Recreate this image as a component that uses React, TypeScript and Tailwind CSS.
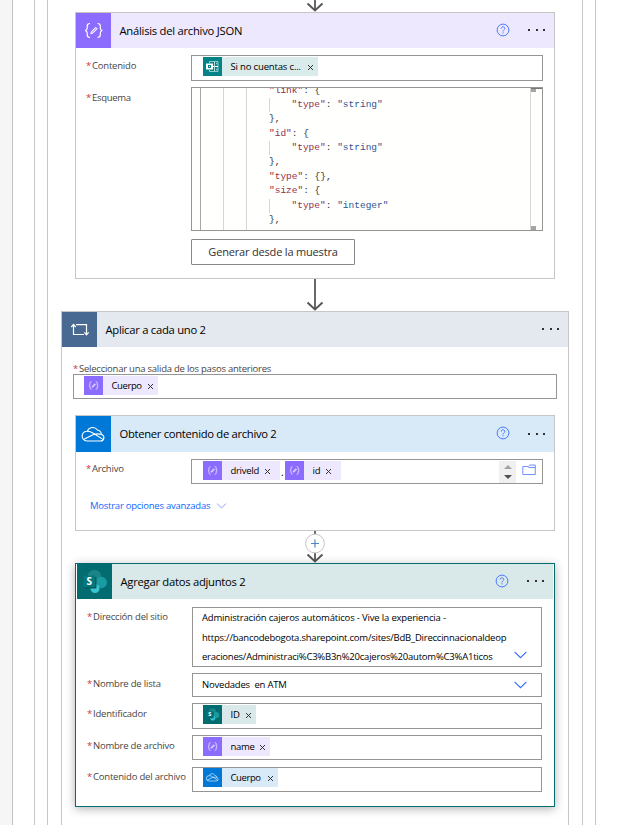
import { ReactNode } from "react";

function BracesIcon({ size }: { size: number }) {
  return (
    <svg width={size} height={size} viewBox="0 0 35 35" fill="none" stroke="#fff" strokeWidth="1.2">
      <path d="M14 10.500c-2.400 0-2.800.8-2.800 2.400v2c0 1.500-.7 2.300-2 2.600 1.300.3 2 1.100 2 2.600v2c0 1.600.4 2.400 2.800 2.400" />
      <path d="M21.500 10.500c2.400 0 2.800.8 2.800 2.400v2c0 1.500.7 2.300 2 2.600-1.300.3-2 1.100-2 2.600v2c0 1.600-.4 2.400-2.800 2.400" />
      <path d="M14.800 20.800l.6-2.300 4.300-4.300 1.600 1.600-4.300 4.300z" fill="#ffffff80" strokeWidth="0.9" />
    </svg>
  );
}

function CloudIcon({ size }: { size: number }) {
  return (
    <svg width={size} height={size} viewBox="0 0 35 35" fill="none" stroke="#fff" strokeWidth="1.1" strokeLinejoin="round">
      <path d="M10.800 24h13.800a3.300 3.300 0 0 0 .8-6.500 5 5 0 0 0-4-4.500 5.700 5.700 0 0 0-10.100 1.200 4.900 4.900 0 0 0-.5 9.800z" />
      <path d="M11.300 14.200c2.500-.2 4 .7 6 2l9.700 6.200M8 22.300l8.500-4.200c2.800-1.400 5.500-1.600 8.900-.6" />
    </svg>
  );
}

function SharePointIcon({ size }: { size: number }) {
  return (
    <svg width={size} height={size} viewBox="0 0 35 35">
      <circle cx="17.500" cy="13" r="7" fill="#1b8488" />
      <circle cx="24.200" cy="18.500" r="5.700" fill="#1a9ba1" />
      <circle cx="18" cy="24.500" r="4.500" fill="#37c6d0" />
      <rect x="8" y="13" width="11.500" height="11.500" rx="1" fill="#035c60" />
      <rect x="6.500" y="11.500" width="11.500" height="11.500" rx="1" fill="#03787c" />
      <text x="12.200" y="20.800" textAnchor="middle" fontSize="10" fontWeight="700" fill="#fff" fontFamily="Open Sans, sans-serif">S</text>
    </svg>
  );
}

function FormsIcon() {
  return (
    <svg width="19" height="19" viewBox="0 0 19 19" fill="none">
      <path d="M6.500 6V4.500h8.500v10H6.500V13" stroke="#8ccccd" />
      <path d="M10 9.500h5" stroke="#fff" />
      <path d="M11.500 5v9" stroke="#b5dede" />
      <path d="M13 6.500h1.500M13 12.500h1.500" stroke="#8ccccd" strokeWidth="1.500" />
      <rect x="3" y="6.500" width="7" height="6" fill="#fff" />
      <rect x="5.500" y="8.500" width="2" height="2" stroke="#038387" />
    </svg>
  );
}

function LoopIcon() {
  return (
    <svg width="35" height="35" viewBox="0 0 35 35" fill="none" stroke="#fff" strokeWidth="1.200">
      <path d="M11.500 13v9.500h10.500M14 12.600h10.500v9.500" />
      <path d="M9.300 15l2.200-2.500 2.200 2.500M22.300 20.300l2.200 2.500 2.200-2.500" />
    </svg>
  );
}

function Help() {
  return (
    <svg className="relative -top-px" width="14" height="14" viewBox="0 0 14 14" fill="none" stroke="#4a7bff" strokeWidth="1">
      <circle cx="7" cy="7" r="5.900" />
      <path d="M5.200 5.600C5.200 4.400 6 3.800 7 3.800s1.800.6 1.800 1.600C8.800 6.800 7 6.800 7 8.400M7 9.300v1.100" />
    </svg>
  );
}

function Dots() {
  return (
    <div className="flex w-[17px] items-center justify-between">
      <i className="size-[2px] bg-[#323130]" />
      <i className="size-[2px] bg-[#323130]" />
      <i className="size-[2px] bg-[#323130]" />
    </div>
  );
}

function Chevron({ small = false }: { small?: boolean }) {
  return (
    <svg width={small ? 11 : 13} height={small ? 6 : 8} viewBox="0 0 13 8" fill="none" stroke={small ? "#6f8cff" : "#2f6bff"} strokeWidth="1.100">
      <path d="M.6.8l5.900 5.900L12.400.8" />
    </svg>
  );
}

function Arrow({ height, plus = false }: { height: number; plus?: boolean }) {
  return (
    <svg className="mx-auto block shrink-0" width="20" height={height} viewBox={`0 0 20 ${height}`} fill="none">
      <path d={`M10 0V${height - 1}`} stroke="#6a6866" strokeWidth="2" />
      <path d={`M2.500 ${height - 8.500}L10 ${height - 1.500}L17.500 ${height - 8.500}`} stroke="#555" strokeWidth="1.900" />
      {plus && (
        <>
          <circle cx="10" cy="12.500" r="9.400" fill="#fff" stroke="#c4c4c4" />
          <path d="M10 8.500v8M6 12.500h8" stroke="#4f86c6" strokeWidth="1.200" />
        </>
      )}
    </svg>
  );
}

function Header({ icon, title, tone, iconTone, track, help = true, height = "h-[35px]" }: {
  icon: ReactNode; title: string; tone: string; iconTone: string; track: string; help?: boolean; height?: string;
}) {
  return (
    <div className={`flex shrink-0 items-center pr-[9px] ${height} ${tone}`}>
      <div className={`flex h-full w-[35px] items-center justify-center ${iconTone}`}>{icon}</div>
      <span className={`ml-[8.5px] flex-1 whitespace-nowrap pt-px text-[11.25px] text-black ${track}`}>{title}</span>
      {help && <Help />}
      <div className="-mt-px ml-[18px]">
        <Dots />
      </div>
    </div>
  );
}

function Label({ children, pad, track }: { children: string; pad: string; track: string }) {
  return (
    <div className={`flex w-[105px] shrink-0 whitespace-nowrap text-[9.5px] leading-[20px] text-[#484644] ${pad}`}>
      <span className="w-[6px] text-[#d13438]">*</span>
      <span className={track}>{children}</span>
    </div>
  );
}

function Token({ icon, iconTone, tone, width, track, end = "mr-[4px]", children }: {
  icon: ReactNode; iconTone: string; tone: string; width: string; track: string; end?: string; children: string;
}) {
  return (
    <span className={`flex h-[19px] items-center text-[9.5px] text-black ${width} ${tone}`}>
      <span className={`flex size-[19px] shrink-0 items-center justify-center ${iconTone}`}>{icon}</span>
      <span className={`ml-[8.5px] flex-1 whitespace-nowrap pt-[1.5px] ${track}`}>{children}</span>
      <svg className={`mt-px shrink-0 ${end}`} width="7" height="7" viewBox="0 0 7 7" stroke="#333" strokeWidth="1">
        <path d="M1 1l5 5M6 1L1 6" />
      </svg>
    </span>
  );
}

const field = "flex border border-[#979593]";
const violet = "bg-[#8c6cff]";
const lilac = "bg-[#eee8fe]";

const code: [number, string, string][] = [
  [0, '"link"', ": {"],
  [1, '"type"', '"string"'],
  [0, "", "},"],
  [0, '"id"', ": {"],
  [1, '"type"', '"string"'],
  [0, "", "},"],
  [0, '"type"', ": {},"],
  [0, '"size"', ": {"],
  [1, '"type"', '"integer"'],
  [0, "", "},"],
];

function Schema() {
  return (
    <div className={`${field} h-[144px] w-[352px] overflow-hidden bg-[#fffffd] pl-[8px]`}>
      <div className="w-[23px] shrink-0 border-l border-[#a8a8a8]" />
      <div className="w-[23px] shrink-0 border-l border-[#d6d6d6]" />
      <div className="w-[23px] shrink-0 border-l border-[#d6d6d6]" />
      <div className="-mt-[4.5px] flex-1 font-['Liberation_Mono',monospace] text-[9.5px] leading-[14.4px] text-[#333]">
        {code.map(([indent, key, rest], i) => (
          <div key={i} className={`h-[14.4px] whitespace-pre ${indent ? "border-l border-[#d6d6d6] pl-[21.5px]" : ""}`}>
            <span className="text-[#94304c]">{key}</span>
            {indent ? <>: <span className="text-[#2c5596]">{rest}</span></> : rest}
          </div>
        ))}
      </div>
      <div className="flex w-[12px] flex-col justify-between border-l border-[#d6d6d6]">
        <div className="border-t border-[#777]">
          <div className="h-[3px] w-[5px] bg-[#a5a5a5]" />
        </div>
        <div className="h-[4px] w-[5px] bg-[#a5a5a5]" />
      </div>
    </div>
  );
}

export default function App() {
  return (
    <div className="flex h-[825px] w-[627px] overflow-hidden bg-white font-['Open_Sans','Noto_Sans',sans-serif]">
      <div className="w-[13px] shrink-0 border-r border-[#c3c3c3] bg-[#f6f6f6]" />
      <div className="ml-[21px] flex w-[562px] shrink-0 border-x border-[#c8c6c4] px-[12px]">
        <div className="flex w-[536px] flex-col border-x border-[#c8c6c4]">
          <Arrow height={12} />
          <section className="mx-auto flex h-[267px] w-[480px] shrink-0 flex-col border border-[#c8c6c4]">
            <Header icon={<BracesIcon size={35} />} title="Análisis del archivo JSON" tone={lilac} iconTone={violet} track="tracking-[-0.26px]" />
            <div className="mt-[7px] flex pl-[10px]">
              <Label pad="pt-px" track="tracking-[-0.2px]">Contenido</Label>
              <div className={`${field} h-[26px] w-[352px] pl-[11px] pt-px`}>
                <Token icon={<FormsIcon />} iconTone="bg-[#038387]" tone="bg-[#d9ebea]" width="w-[115px]" track="tracking-[-0.16px]">Si no cuentas c...</Token>
              </div>
            </div>
            <div className="mt-[6px] flex pl-[10px]">
              <Label pad="pt-px" track="tracking-[-0.3px]">Esquema</Label>
              <Schema />
            </div>
            <button className="ml-[115px] mt-[8px] h-[26px] w-[164px] shrink-0 whitespace-nowrap rounded-[1px] border border-[#8a8886] text-[11px] tracking-[-0.18px] text-[#323130]">
              Generar desde la muestra
            </button>
          </section>
          <Arrow height={32} />
          <section className="mx-auto flex h-[560px] w-[508px] shrink-0 flex-col border border-[#c8c6c4]">
            <Header icon={<LoopIcon />} title="Aplicar a cada uno 2" tone="bg-[#e4e8ef]" iconTone="bg-[#486991]" track="tracking-[-0.27px]" help={false} />
            <div className="ml-[11px] mt-[12px] flex h-[15px] whitespace-nowrap text-[9.5px] leading-[20px] text-[#484644]">
              <span className="w-[6px] text-[#d13438]">*</span>
              <span className="tracking-[-0.24px]">Seleccionar una salida de los pasos anteriores</span>
            </div>
            <div className={`${field} ml-[11px] h-[25px] w-[484px] shrink-0 pl-[10px] pt-px`}>
              <Token icon={<BracesIcon size={19} />} iconTone={violet} tone={lilac} width="w-[74px]" track="tracking-[-0.4px]">Cuerpo</Token>
            </div>
            <section className="mx-auto mt-[16px] flex h-[116px] w-[480px] shrink-0 flex-col border border-[#c8c6c4]">
              <Header icon={<CloudIcon size={35} />} title="Obtener contenido de archivo 2" tone="bg-[#d8e9f8]" iconTone="bg-[#0078d7]" track="tracking-[-0.31px]" height="h-[36px]" />
              <div className="mt-[7px] flex pl-[10px]">
                <Label pad="" track="tracking-[-0.2px]">Archivo</Label>
                <div className={`${field} h-[25px] w-[352px] pl-[11px] pt-px`}>
                  <Token icon={<BracesIcon size={19} />} iconTone={violet} tone={lilac} width="w-[77px]" end="mr-[9px]" track="tracking-[-0.3px]">driveId</Token>
                  <span className="w-[5px] pl-[1px] text-[10px] leading-[23px]">.</span>
                  <Token icon={<BracesIcon size={19} />} iconTone={violet} tone={lilac} width="w-[56px]" end="mr-[9px]" track="tracking-[-0.2px]">id</Token>
                  <div className="ml-auto flex w-[17px] flex-col items-center justify-between bg-[#f0f0f0] py-[4px]">
                    <i className="border-x-4 border-b-4 border-x-transparent border-b-[#a3a3a3]" />
                    <i className="border-x-4 border-t-4 border-x-transparent border-t-[#505050]" />
                  </div>
                  <svg className="ml-[6px] mr-[6px] mt-[3px]" width="14" height="12" viewBox="0 0 14 12" fill="none" stroke="#7191ff">
                    <path d="M.8 2.500h5.500l1.500-1.500h5.500v9.500H.8zM6.300 3.500h7" />
                  </svg>
                </div>
              </div>
              <div className="mt-[14px] flex items-center gap-[6px] whitespace-nowrap pl-[14px] text-[9.5px] leading-[16px] text-[#1267ff]">
                <span className="tracking-[-0.24px]">Mostrar opciones avanzadas</span>
                <Chevron small />
              </div>
            </section>
            <Arrow height={32} plus />
            <section className="mx-auto flex h-[244px] w-[480px] shrink-0 flex-col border border-[#036c70] bg-white px-px shadow-[0_2px_9px_rgba(0,0,0,0.3)]">
              <Header icon={<SharePointIcon size={35} />} title="Agregar datos adjuntos 2" tone="bg-[#d9e8e8]" iconTone="bg-[#036c70]" track="tracking-[-0.27px]" />
              <div className="mt-[8px] flex pl-[10px]">
                <Label pad="" track="tracking-[-0.2px]">Dirección del sitio</Label>
                <div className={`${field} h-[60px] w-[350px] items-end pl-[9px]`}>
                  <div className="flex-1 self-start whitespace-nowrap text-[9.5px] leading-[19.5px] text-black">
                    <div className="tracking-[-0.17px]">Administración cajeros automáticos - Vive la experiencia -</div>
                    <div className="tracking-[-0.22px]">https://bancodebogota.sharepoint.com/sites/BdB_Direccinnacionaldeop</div>
                    <div className="tracking-[-0.22px]">eraciones/Administraci%C3%B3n%20cajeros%20autom%C3%A1ticos</div>
                  </div>
                  <div className="mb-[7px] mr-[14px]"><Chevron /></div>
                </div>
              </div>
              <div className="mt-[6px] flex pl-[10px]">
                <Label pad="pt-px" track="tracking-[-0.2px]">Nombre de lista</Label>
                <div className={`${field} h-[24px] w-[350px] items-center pl-[9px] pr-[14px]`}>
                  <span className="flex-1 whitespace-pre text-[9.5px] tracking-[-0.2px] text-black">{"Novedades  en ATM"}</span>
                  <Chevron />
                </div>
              </div>
              <div className="mt-[6px] flex pl-[10px]">
                <Label pad="pt-px" track="tracking-[-0.2px]">Identificador</Label>
                <div className={`${field} h-[26px] w-[350px] pl-[10px] pt-px`}>
                  <Token icon={<SharePointIcon size={19} />} iconTone="bg-[#036c70]" tone="bg-[#d9e8e8]" width="w-[53px]" track="tracking-[-0.2px]">ID</Token>
                </div>
              </div>
              <div className="mt-[6px] flex pl-[10px]">
                <Label pad="pt-px" track="tracking-[-0.22px]">Nombre de archivo</Label>
                <div className={`${field} h-[25px] w-[350px] pl-[10px] pt-px`}>
                  <Token icon={<BracesIcon size={19} />} iconTone={violet} tone={lilac} width="w-[67px]" track="tracking-[-0.3px]">name</Token>
                </div>
              </div>
              <div className="mt-[7px] flex pl-[10px]">
                <Label pad="" track="tracking-[-0.2px]">Contenido del archivo</Label>
                <div className={`${field} h-[25px] w-[350px] pl-[10px]`}>
                  <Token icon={<CloudIcon size={19} />} iconTone="bg-[#0078d7]" tone="bg-[#d8e9f8]" width="w-[75px]" track="tracking-[-0.4px]">Cuerpo</Token>
                </div>
              </div>
            </section>
          </section>
        </div>
      </div>
    </div>
  );
}
